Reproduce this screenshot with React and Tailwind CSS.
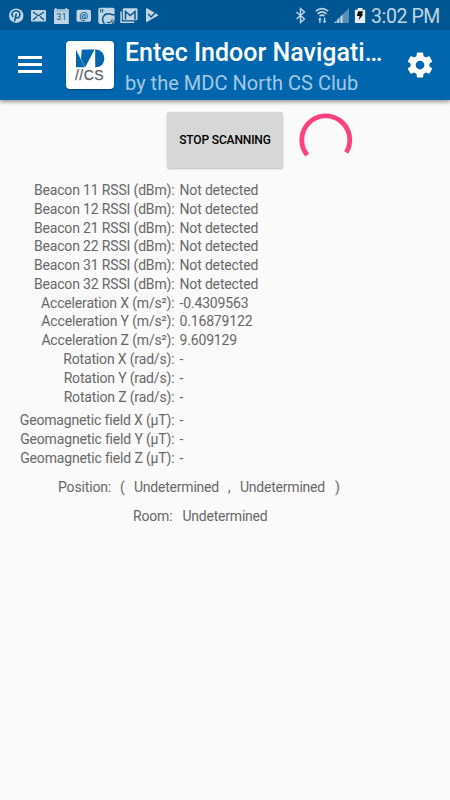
import React from "react";

const beacons = ["11", "12", "21", "22", "31", "32"];
const readings = [
  ...beacons.map((b) => [`Beacon ${b} RSSI (dBm):`, "Not detected"]),
  ["Acceleration X (m/s²):", "-0.4309563"],
  ["Acceleration Y (m/s²):", "0.16879122"],
  ["Acceleration Z (m/s²):", "9.609129"],
  ["Rotation X (rad/s):", "-"],
  ["Rotation Y (rad/s):", "-"],
  ["Rotation Z (rad/s):", "-"],
];
const magnetic = ["X", "Y", "Z"].map((a) => [`Geomagnetic field ${a} (µT):`, "-"]);

function Rows({ items }) {
  return items.map(([label, value]) => (
    <div key={label} className="flex h-[18.77px] items-center gap-[5px] whitespace-nowrap">
      <span className="w-[174.5px] text-right">{label}</span>
      <span>{value}</span>
    </div>
  ));
}

function NotificationIcons() {
  return (
    <svg width="170" height="30" viewBox="0 0 170 30" fill="#c0d5e4" className="shrink-0">
      <circle cx="16.2" cy="15.7" r="7.2" />
      <path d="M14.4 21.5l2-8M13.2 17.1c-3-3.8.2-6.7 3.4-6.4 4.5.4 4 7.4.5 7.3-1.1 0-1.6-.6-1.7-1.3" fill="none" stroke="#005691" strokeWidth="1.5" />
      <rect x="31" y="10" width="15" height="11.5" rx="1" />
      <path d="M33 12l5.5 3.7L44 12M33 20l4-3.5M44 20l-4-3.5" fill="none" stroke="#005691" strokeWidth="1.3" />
      <path d="M55 8h1.5v1.2h9V8H67v1.2h1.8V24H54V9.2h1z" />
      <path d="M55.5 11h12" stroke="#005691" strokeWidth=".7" strokeDasharray="1 1" />
      <text x="61.4" y="20" textAnchor="middle" fontSize="9" fontFamily="Roboto" fill="#005691">31</text>
      <rect x="76.5" y="9.8" width="14.5" height="12" rx="1.8" />
      <text x="83.7" y="18.7" textAnchor="middle" fontSize="9.5" fontFamily="Roboto" fontWeight="700" fill="#005691">@</text>
      <rect x="98.3" y="7.7" width="16.3" height="16.2" rx="1.8" />
      <path d="M100.7 9v3.5M102.7 9v3.5" stroke="#005691" strokeWidth="1" />
      <path d="M104.4 23.9c-4-5.4-.6-10.4 4.3-10.2 1.6 0 2.6.5 3.3 1.1h2.6" fill="none" stroke="#005691" strokeWidth="1.4" />
      <path d="M112.3 19.2a3.6 3.6 0 0 1-5.6 2.9M112 23.9l2.6-3.2" fill="none" stroke="#005691" strokeWidth="1.2" />
      <path d="M120.3 11.5h1.5v10h12.5V23h-14z" />
      <rect x="122.8" y="8.2" width="14.7" height="12" rx="1" />
      <path d="M125.5 19.5v-8l4.7 4 4.8-4v8" fill="none" stroke="#005691" strokeWidth="1.5" />
      <path d="M146 8.8q0-1 1-.5l10.7 6.1q1 .7 0 1.4L147 22q-1 .4-1-.6z" />
      <path d="M148.2 14l2.8 3 6.3-6.3" fill="none" stroke="#005691" strokeWidth="1.5" />
    </svg>
  );
}

function SystemIcons() {
  return (
    <svg width="74" height="30" viewBox="292 0 74 30" fill="#c0d5e4" className="ml-auto shrink-0">
      <path d="M296.5 12l8 7-4 3.5V8.5l4 3.5-8 7" fill="none" stroke="#c0d5e4" strokeWidth="1.4" />
      <path d="M315.8 11.2q6.2-5 12.4 0M317.6 13.8q4.4-3.8 8.8 0M319.6 16.2q2.4-2 4.8 0" fill="none" stroke="#c0d5e4" strokeWidth="1.6" />
      <path d="M319.9 17.6l1.9 2.2h-1.2V23h-1.4v-3.2H318zM324.6 23.2l-1.9-2.2h1.2v-3.3h1.4V21h1.2z" />
      <path d="M334 23L349 8v15z" opacity=".45" />
      <path d="M334 23l1.8-1.8V23zM337.2 19.8l1.8-1.8v5h-1.8zM340.4 16.7l2.2-2.2V23h-2.2z" />
      <path d="M357.7 8h4.8v1.7h2.7V23h-10.3V9.7h2.8z" fill="#e6eef4" />
      <path d="M358.2 11.3h5l-1.5 3h1.7l-4.8 6 1-4.3h-2.8z" fill="#111" />
    </svg>
  );
}

function Logo() {
  return (
    <div className="ml-[24px] h-12 w-12 shrink-0 rounded-[4px] bg-white shadow-[0_1px_2px_rgba(0,0,0,0.35)]">
      <svg width="48" height="48" viewBox="66 41 48 48">
        <path d="M76 49.8L84.9 67.3H76z" fill="#0067ad" />
        <path d="M81.8 49.5H94.6L85.2 67.3L81 59z" fill="#0067ad" />
        <path d="M95.2 49.5C107.3 49 107.3 67.8 95.2 67.3z" fill="#0067ad" />
        <text x="75" y="80.3" fontFamily="Liberation Sans" fontSize="14" fill="#59636b" stroke="#59636b" strokeWidth=".25" textLength="28.7">//CS</text>
      </svg>
    </div>
  );
}

export default function App() {
  return (
    <div className="h-[800px] w-[450px] overflow-hidden bg-[#fafafa] font-['Roboto','Noto_Sans',sans-serif] text-[#686868]">
      <div className="flex h-[30px] items-center bg-[#005691]">
        <NotificationIcons />
        <SystemIcons />
        <span className="ml-[5px] mr-[10px] mt-[3px] w-[69px] whitespace-nowrap text-[19.5px] leading-[28px] tracking-[-0.4px] text-[#c0d5e4]">3:02 PM</span>
      </div>
      <header className="flex h-[70px] items-center bg-[#0067ae] shadow-[0_2px_4px_rgba(0,0,0,0.4)]">
        <div className="-mt-px ml-[18px] flex w-6 shrink-0 flex-col gap-[4px]">
          <div className="h-[3px] bg-white" />
          <div className="h-[3px] bg-white" />
          <div className="h-[3px] bg-white" />
        </div>
        <Logo />
        <div className="ml-[11px] w-[268px] whitespace-nowrap pt-[6px]">
          <h1 className="text-[25px] font-medium leading-[30px] text-white">Entec Indoor Navigati…</h1>
          <p className="text-[20px] leading-[30px] tracking-[0.02px] text-[#a4c9e3]">by the MDC North CS Club</p>
        </div>
        <svg width="30" height="30" viewBox="0 0 24 24" fill="#fff" className="ml-[12px] shrink-0">
          <path d="M19.43 12.98c.04-.32.07-.64.07-.98s-.03-.66-.07-.98l2.11-1.65c.19-.15.24-.42.12-.64l-2-3.46c-.12-.22-.39-.3-.61-.22l-2.49 1c-.52-.4-1.08-.73-1.69-.98l-.38-2.65C14.46 2.18 14.25 2 14 2h-4c-.25 0-.46.18-.49.42l-.38 2.65c-.61.25-1.17.59-1.69.98l-2.49-1c-.23-.09-.49 0-.61.22l-2 3.46c-.13.22-.07.49.12.64l2.11 1.65c-.04.32-.07.65-.07.98s.03.66.07.98l-2.11 1.65c-.19.15-.24.42-.12.64l2 3.46c.12.22.39.3.61.22l2.49-1c.52.4 1.08.73 1.69.98l.38 2.65c.03.24.24.42.49.42h4c.25 0 .46-.18.49-.42l.38-2.65c.61-.25 1.17-.59 1.69-.98l2.49 1c.23.09.49 0 .61-.22l2-3.46c.12-.22.07-.49-.12-.64zM12 15.5a3.5 3.5 0 1 1 0-7 3.5 3.5 0 0 1 0 7z" />
        </svg>
      </header>
      <main className="text-[14px] tracking-[-0.16px]">
        <div className="flex h-[81.2px] items-start pl-[167px] pt-[12px]">
          <button className="h-[56px] w-[116px] rounded-[2px] bg-[#d6d7d7] text-[12px] font-medium tracking-[-0.15px] text-black shadow-[0_1px_2px_rgba(0,0,0,0.25)]">STOP SCANNING</button>
          <svg width="56" height="56" viewBox="0 0 56 56" className="ml-[15px]">
            <path d="M9.2 43.1A24 24 0 1 1 48.2 40.5" fill="none" stroke="#ff4081" strokeWidth="4.8" />
          </svg>
        </div>
        <Rows items={readings} />
        <div className="h-[5px]" />
        <Rows items={magnetic} />
        <div className="mt-[10px] flex h-[19px] items-center whitespace-nowrap pl-[58px]">
          <span className="w-[62px]">Position:</span>
          <span className="w-[14px]">(</span>
          <span className="w-[94px] tracking-[-0.22px]">Undetermined</span>
          <span className="w-[12px]">,</span>
          <span className="w-[95px] tracking-[-0.22px]">Undetermined</span>
          <span>)</span>
        </div>
        <div className="mt-[10px] flex h-[19px] items-center whitespace-nowrap pl-[133px]">
          <span className="w-[49.5px]">Room:</span>
          <span className="tracking-[-0.22px]">Undetermined</span>
        </div>
      </main>
    </div>
  );
}
